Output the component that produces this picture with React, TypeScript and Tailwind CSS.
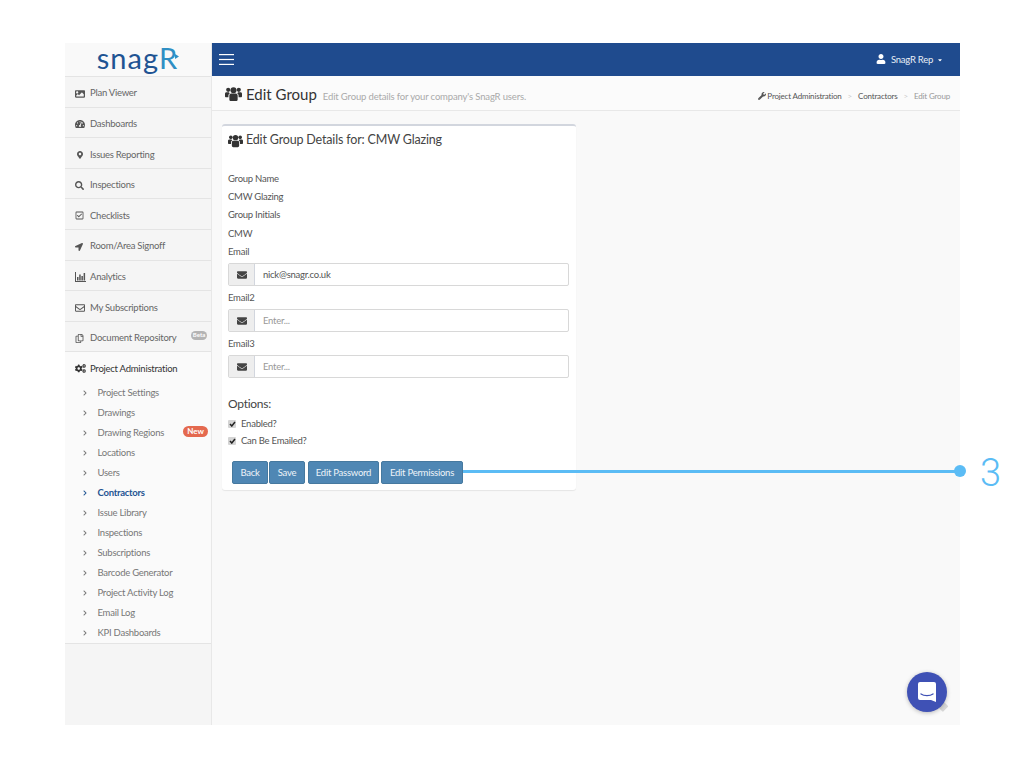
import React from "react";
import { FaImage, FaTachometerAlt, FaMapMarkerAlt, FaSearch, FaRegCheckSquare, FaLocationArrow, FaRegEnvelope, FaRegCopy, FaCogs, FaChevronRight, FaWrench, FaUser, FaEnvelope, FaCaretDown } from "react-icons/fa";

function Users({ w, h }: { w: number; h: number }) {
  return (
    <svg width={w} height={h} viewBox="0 0 18 16" fill="currentColor">
      <circle cx="9" cy="4" r="3.2" />
      <circle cx="3.4" cy="3.6" r="2.2" />
      <circle cx="14.6" cy="3.6" r="2.2" />
      <path d="M4.6 9.6C4.6 8 6 7.6 7 7.6h4c1 0 2.4.4 2.4 2v4.2c0 1-.8 1.7-1.8 1.7H6.4c-1 0-1.8-.7-1.8-1.7z" />
      <path d="M0 7.8C0 6.6 1 6.2 2 6.2h2.2c.2.5.6 1 1 1.2-1 .4-1.6 1.2-1.6 2.4V11.5H1.2C.5 11.5 0 11 0 10.3z" />
      <path d="M18 7.8c0-1.2-1-1.6-2-1.6h-2.2c-.2.5-.6 1-1 1.2 1 .4 1.6 1.2 1.6 2.4v1.7h2.4c.7 0 1.2-.5 1.2-1.2z" />
    </svg>
  );
}

function Bars() {
  return (
    <svg width="11" height="10" viewBox="0 0 11 10" fill="currentColor">
      <rect x="0" y="0" width="1" height="9.5" />
      <rect x="0" y="9" width="11" height="1" />
      <rect x="2" y="5" width="1.5" height="3.5" />
      <rect x="4.2" y="2.5" width="1.5" height="6" />
      <rect x="6.4" y="4" width="1.5" height="4.5" />
      <rect x="8.6" y="1" width="1.5" height="7.5" />
    </svg>
  );
}

const top = [
  ["Plan Viewer", <FaImage size={10} />],
  ["Dashboards", <FaTachometerAlt size={10} />],
  ["Issues Reporting", <FaMapMarkerAlt size={8} className="ml-[1px]" />],
  ["Inspections", <FaSearch size={9} />],
  ["Checklists", <FaRegCheckSquare size={9} />],
  ["Room/Area Signoff", <FaLocationArrow size={8} />],
  ["Analytics", <Bars />],
  ["My Subscriptions", <FaRegEnvelope size={10} />],
  ["Document Repository", <FaRegCopy size={9} />],
] as const;

const sub = ["Project Settings", "Drawings", "Drawing Regions", "Locations", "Users", "Contractors", "Issue Library", "Inspections", "Subscriptions", "Barcode Generator", "Project Activity Log", "Email Log", "KPI Dashboards"];

function EmailField({ label, value }: { label: string; value?: string }) {
  return (
    <div>
      <div className="h-[18px] leading-[19px] text-[#555]">{label}</div>
      <div className="mt-[3px] flex h-[23px] rounded-[2px] border border-[#d8d8d8] bg-white">
        <div className="flex w-[26px] items-center justify-center border-r border-[#d2d6de] bg-[#eeeeee] text-[#444]"><FaEnvelope size={10} /></div>
        <div className={`pl-2 leading-[21px] ${value ? "text-[#555]" : "text-[#999]"}`}>{value ?? "Enter..."}</div>
      </div>
    </div>
  );
}

function Check({ label }: { label: string }) {
  return (
    <div className="flex h-[17px] items-center gap-[5px] text-[#555]">
      <span className="flex h-[8px] w-[8px] items-center justify-center rounded-[1px] bg-[#d4d4d4]">
        <svg width="7" height="6" viewBox="0 0 7 6"><path d="M1 3l1.8 2L6 1" stroke="#222" strokeWidth="1.5" fill="none" /></svg>
      </span>
      <span className="pt-[1px]">{label}</span>
    </div>
  );
}

export default function App() {
  return (
    <div className="relative h-[768px] w-[1024px] overflow-hidden bg-white pl-[65px] pt-[43px] text-[9.5px] tracking-[-0.25px]" style={{ fontFamily: "Lato, sans-serif" }}>
      <div className="flex h-[682px] w-[895px] bg-[#f9f9f9]">
        <aside className="flex w-[147px] flex-col border-r border-[#e8e8e8] bg-[#f5f5f5]">
          <div className="flex h-[33px] items-center justify-center bg-[#f9f9f9] pb-[5px] text-[29px] leading-none tracking-[1px] text-[#1f5493]">
            snag<span className="text-[#2f8fc4]">R</span>
            <svg width="4" height="5" viewBox="0 0 4 5" className="mb-[1px] ml-[-3px]"><path d="M0 0l4 2.5L0 5z" fill="#2f8fc4" /></svg>
          </div>
          {top.map(([t, icon]) => (
            <div key={t} className="relative flex h-[30.6px] items-center border-t border-[#e4e4e4] pl-[10px] pt-[3.5px] text-[#666]">
              <span className="flex w-[15px] justify-start text-[#555]">{icon}</span>
              <span>{t}</span>
              {t === "Document Repository" && <span className="absolute right-[4px] top-[9px] flex h-[9px] w-[16px] items-center justify-center rounded-full bg-[#b4b4b4] text-[6px] font-bold leading-none tracking-normal text-white">Beta</span>}
            </div>
          ))}
          <div className="border-y border-[#e4e4e4] bg-[#fafafa]">
            <div className="flex h-[30.6px] items-center pl-[10px] pt-[2px] text-[#333]">
              <span className="w-[15px] text-[#333]"><FaCogs size={11} /></span>
              <span>Project Administration</span>
            </div>
            <div>
              {sub.map((s) => (
                <div key={s} className={`relative flex h-5 items-center pl-[17px] ${s === "Contractors" ? "font-bold text-[#1f5493]" : "text-[#777]"}`}>
                  <span className="w-[15.5px]"><FaChevronRight size={6} /></span>
                  <span>{s}</span>
                  {s === "Drawing Regions" && <span className="absolute right-[3px] top-[3px] flex h-[11px] w-[25px] items-center justify-center rounded-full bg-[#e4694f] text-[8px] font-bold leading-none tracking-normal text-white">New</span>}
                </div>
              ))}
            </div>
          </div>
        </aside>
        <div className="flex min-w-0 flex-1 flex-col">
          <header className="flex h-[33px] items-center justify-between bg-[#1f4b8e] pl-[7px] pr-[17px] text-white">
            <svg width="15" height="11" viewBox="0 0 15 11" fill="currentColor"><rect width="15" height="1.2" /><rect y="4.9" width="15" height="1.2" /><rect y="9.8" width="15" height="1.2" /></svg>
            <div className="flex items-center gap-[4px] pt-[1px]"><FaUser size={10} className="mr-[1px] mb-[2px]" /><span className="text-[#e8eef6]">SnagR Rep</span><FaCaretDown size={6} /></div>
          </header>
          <div className="flex h-[35px] items-center justify-between border-b border-[#e8e8e8] bg-[#fbfbfb] pl-[13px] pr-[10px] pt-[2px]">
            <div className="flex items-baseline">
              <span className="mr-[4px] self-center text-[#333]"><Users w={17} h={16} /></span>
              <span className="text-[15px] tracking-[0px] text-[#333]">Edit Group</span>
              <span className="ml-[6px] text-[9.5px] tracking-[-0.15px] text-[#aaa]">Edit Group details for your company's SnagR users.</span>
            </div>
            <div className="flex items-center pt-[3px] text-[8px] tracking-[-0.18px] text-[#555]">
              <FaWrench size={8} className="mr-[1px]" />Project Administration<span className="mx-[6px] text-[#ccc]">&gt;</span>Contractors<span className="mx-[6px] text-[#ccc]">&gt;</span><span className="text-[#999]">Edit Group</span>
            </div>
          </div>
          <div className="mt-[13px] ml-[10px] h-[366px] w-[354px] rounded-[3px] border-t-2 border-[#d2d6de] bg-white pl-[6px] pr-[7px] shadow-[0_1px_1px_rgba(0,0,0,0.08)]">
            <div className="flex h-[29px] items-center text-[12.5px] tracking-[-0.17px] text-[#444]">
              <span className="mr-[3px] text-[#333]"><Users w={15} h={14} /></span>Edit Group Details for: CMW Glazing
            </div>
            <div className="mt-[14px] h-[18px] leading-[19px] text-[#555]">Group Name</div>
            <div className="h-[18.5px] leading-[20px] text-[#555]">CMW Glazing</div>
            <div className="h-[18px] leading-[18px] text-[#555]">Group Initials</div>
            <div className="h-[18.5px] leading-[19.5px] text-[#555]">CMW</div>
            <div className="flex flex-col gap-[2px]">
              <EmailField label="Email" value="nick@snagr.co.uk" />
              <EmailField label="Email2" />
              <EmailField label="Email3" />
            </div>
            <div className="mt-[17px] h-[18px] text-[12px] leading-[18px] text-[#444]">Options:</div>
            <div className="mt-[2px]">
              <Check label="Enabled?" />
              <Check label="Can Be Emailed?" />
            </div>
            <div className="ml-[4px] mt-[12px] flex gap-[1px]">
              {[["Back", "w-[36px]"], ["Save", "w-[36px]"], ["Edit Password", "ml-[2px] w-[71px]"], ["Edit Permissions", "ml-[1px] w-[82px]"]].map(([t, w]) => (
                <div key={t} className={`flex h-[23px] items-center justify-center rounded-[2px] border border-[#46799f] bg-[#4f87b4] pt-[1px] text-[#eef4f9] ${w}`}>{t}</div>
              ))}
            </div>
          </div>
        </div>
      </div>
      <div className="absolute left-[463px] top-[469.5px] h-[3px] w-[497px] bg-[#5bbcf5]" />
      <div className="absolute left-[954px] top-[465px] h-3 w-3 rounded-full bg-[#5bbcf5]" />
      <div className="absolute left-[980px] top-[450px] text-[38px] font-light leading-[46px] tracking-normal text-[#5bbcf5]" style={{ fontFamily: "Roboto, sans-serif" }}>3</div>
      <div className="absolute left-[938px] top-[702px] h-[8px] w-[9px] rotate-45 rounded-[1px] bg-[#d8d8d8]" />
      <div className="absolute left-[907px] top-[672px] flex h-10 w-10 items-center justify-center rounded-full bg-[#3f51b5] shadow-[0_1px_4px_rgba(0,0,0,0.25)]">
        <svg width="20" height="23" viewBox="0 0 20 23"><path d="M3 1h14a2 2 0 0 1 2 2v18l-5-2H3a2 2 0 0 1-2-2V3a2 2 0 0 1 2-2z" fill="#fff" /><path d="M4 13c3 2.2 9 2.2 12 0" stroke="#3f51b5" strokeWidth="1.3" fill="none" strokeLinecap="round" /></svg>
      </div>
    </div>
  );
}
